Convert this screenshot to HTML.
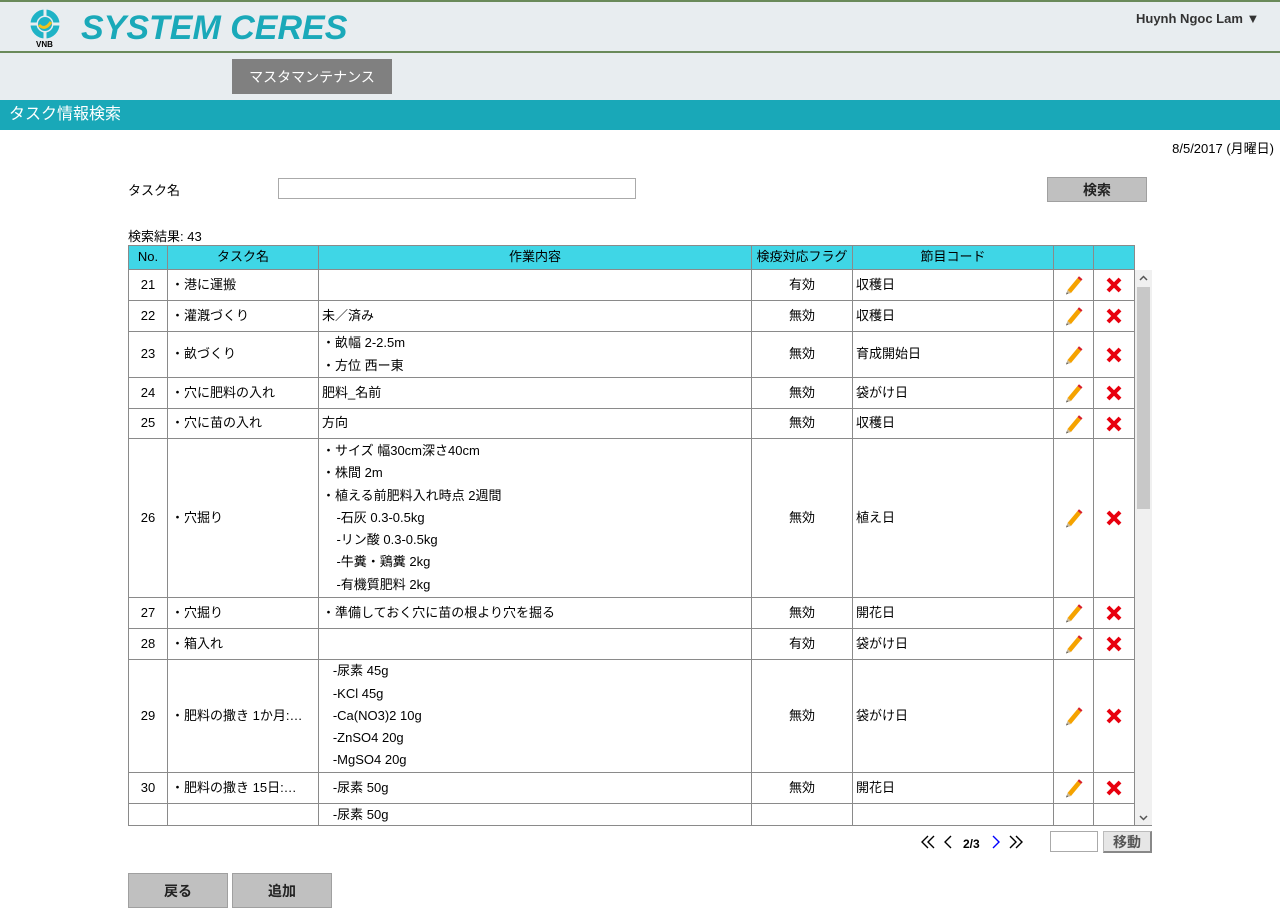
<!DOCTYPE html>
<html><head><meta charset="utf-8">
<style>
*{margin:0;padding:0;box-sizing:border-box}
body{width:1280px;height:913px;overflow:hidden;background:#fff;font-family:"Liberation Sans","Noto Sans CJK JP",sans-serif;font-size:13px;color:#000;position:relative}
.abs{position:absolute}
#top{left:0;top:0;width:1280px;height:100px;background:#e8edf0}
.gl{left:0;width:1280px;height:2px;background:#6a8a5a}
.r{position:absolute;left:0;width:1007px;border-bottom:1px solid #8a8a8a}
.c{position:absolute;top:0;bottom:0;border-right:1px solid #8a8a8a;display:flex;align-items:center;padding-left:3px;line-height:22.3px}
.c1{left:0;width:40px;justify-content:center;padding:0;border-left:1px solid #8a8a8a}
.c2{left:40px;width:151px}
.c3{left:191px;width:433px}
.c4{left:624px;width:101px;justify-content:center;padding:0}
.c5{left:725px;width:201px}
.c6{left:926px;width:40px;justify-content:center;padding:0}
.c7{left:966px;width:41px;justify-content:center;padding:0}
.btn{position:absolute;background:#c0c0c0;border:1px solid #a0a0a0;display:flex;align-items:center;justify-content:center;font-weight:bold;font-size:14px;color:#222}
</style></head><body>
<div id="top" class="abs"></div>
<div class="abs gl" style="top:0"></div>
<div class="abs gl" style="top:51px"></div>
<svg class="abs" style="left:30px;top:9px" width="30" height="30" viewBox="0 0 30 30">
<circle cx="15" cy="15" r="11.5" fill="none" stroke="#1fb3c6" stroke-width="6"/>
<rect x="13.5" y="0" width="3" height="30" fill="#e8edf0"/><rect x="0" y="13.5" width="30" height="3" fill="#e8edf0"/>
<circle cx="15" cy="15" r="7" fill="#1fb3c6"/>
<path d="M9 16 Q15 22 21 13" stroke="#f2c21b" stroke-width="3" fill="none"/>
</svg>
<div class="abs" style="left:36px;top:40px;font-size:8px;font-weight:bold">VNB</div>
<div class="abs" style="left:81px;top:9px;font-size:34px;font-weight:bold;font-style:italic;color:#1aa9b9">SYSTEM CERES</div>
<div class="abs" style="left:1136px;top:11px;font-size:13px;font-weight:bold;color:#333">Huynh Ngoc Lam ▼</div>
<div class="abs" style="left:232px;top:59px;width:160px;height:35px;background:#808080;color:#fff;display:flex;align-items:center;justify-content:center;font-size:14px">マスタマンテナンス</div>
<div class="abs" style="left:0;top:100px;width:1280px;height:30px;background:#19a8b8;color:#fff;font-size:16px;padding-left:9px;line-height:30px">タスク情報検索</div>
<div class="abs" style="right:6px;top:138px">8/5/2017 (月曜日)</div>
<div class="abs" style="left:128px;top:180px">タスク名</div>
<div class="abs" style="left:278px;top:178px;width:358px;height:21px;border:1px solid #aaa"></div>
<div class="btn" style="left:1047px;top:177px;width:100px;height:25px">検索</div>
<div class="abs" style="left:128px;top:226px">検索結果: 43</div>
<div class="abs" style="left:128px;top:245px;width:1007px;height:25px;background:#3fd6e6;border-top:1px solid #8a8a8a">
<div class="r" style="top:0;height:24px;border-bottom:1px solid #8a8a8a">
<div class="c c1">No.</div><div class="c c2" style="justify-content:center;padding:0">タスク名</div><div class="c c3" style="justify-content:center;padding:0">作業内容</div><div class="c c4">検疫対応フラグ</div><div class="c c5" style="justify-content:center;padding:0">節目コード</div><div class="c c6"></div><div class="c c7"></div></div>
</div>
<div class="abs" style="left:128px;top:270px;width:1024px;height:556px;overflow:hidden;border-bottom:1px solid #8a8a8a">
<div class="r" style="top:0;height:31px"><div class="c c1">21</div><div class="c c2">・港に運搬</div><div class="c c3"></div><div class="c c4">有効</div><div class="c c5">収穫日</div><div class="c c6 e"></div><div class="c c7 d"></div></div>
<div class="r" style="top:31px;height:31px"><div class="c c1">22</div><div class="c c2">・灌漑づくり</div><div class="c c3">未／済み</div><div class="c c4">無効</div><div class="c c5">収穫日</div><div class="c c6 e"></div><div class="c c7 d"></div></div>
<div class="r" style="top:62px;height:46px"><div class="c c1">23</div><div class="c c2">・畝づくり</div><div class="c c3">・畝幅 2-2.5m<br>・方位 西ー東</div><div class="c c4">無効</div><div class="c c5">育成開始日</div><div class="c c6 e"></div><div class="c c7 d"></div></div>
<div class="r" style="top:108px;height:31px"><div class="c c1">24</div><div class="c c2">・穴に肥料の入れ</div><div class="c c3">肥料_名前</div><div class="c c4">無効</div><div class="c c5">袋がけ日</div><div class="c c6 e"></div><div class="c c7 d"></div></div>
<div class="r" style="top:139px;height:30px"><div class="c c1">25</div><div class="c c2">・穴に苗の入れ</div><div class="c c3">方向</div><div class="c c4">無効</div><div class="c c5">収穫日</div><div class="c c6 e"></div><div class="c c7 d"></div></div>
<div class="r" style="top:169px;height:159px"><div class="c c1">26</div><div class="c c2">・穴掘り</div><div class="c c3">・サイズ 幅30cm深さ40cm<br>・株間 2m<br>・植える前肥料入れ時点 2週間<br>&nbsp;&nbsp;&nbsp;&nbsp;-石灰 0.3-0.5kg<br>&nbsp;&nbsp;&nbsp;&nbsp;-リン酸 0.3-0.5kg<br>&nbsp;&nbsp;&nbsp;&nbsp;-牛糞・鶏糞 2kg<br>&nbsp;&nbsp;&nbsp;&nbsp;-有機質肥料 2kg</div><div class="c c4">無効</div><div class="c c5">植え日</div><div class="c c6 e"></div><div class="c c7 d"></div></div>
<div class="r" style="top:328px;height:31px"><div class="c c1">27</div><div class="c c2">・穴掘り</div><div class="c c3">・準備しておく穴に苗の根より穴を掘る</div><div class="c c4">無効</div><div class="c c5">開花日</div><div class="c c6 e"></div><div class="c c7 d"></div></div>
<div class="r" style="top:359px;height:31px"><div class="c c1">28</div><div class="c c2">・箱入れ</div><div class="c c3"></div><div class="c c4">有効</div><div class="c c5">袋がけ日</div><div class="c c6 e"></div><div class="c c7 d"></div></div>
<div class="r" style="top:390px;height:113px"><div class="c c1">29</div><div class="c c2">・肥料の撒き 1か月:…</div><div class="c c3">&nbsp;&nbsp;&nbsp;-尿素 45g<br>&nbsp;&nbsp;&nbsp;-KCl 45g<br>&nbsp;&nbsp;&nbsp;-Ca(NO3)2 10g<br>&nbsp;&nbsp;&nbsp;-ZnSO4 20g<br>&nbsp;&nbsp;&nbsp;-MgSO4 20g</div><div class="c c4">無効</div><div class="c c5">袋がけ日</div><div class="c c6 e"></div><div class="c c7 d"></div></div>
<div class="r" style="top:503px;height:31px"><div class="c c1">30</div><div class="c c2">・肥料の撒き 15日:…</div><div class="c c3">&nbsp;&nbsp;&nbsp;-尿素 50g</div><div class="c c4">無効</div><div class="c c5">開花日</div><div class="c c6 e"></div><div class="c c7 d"></div></div>
<div class="r" style="top:534px;height:40px;border-bottom:none"><div class="c c1"></div><div class="c c2"></div><div class="c c3" style="align-items:flex-start;padding-top:0">&nbsp;&nbsp;&nbsp;-尿素 50g</div><div class="c c4"></div><div class="c c5"></div><div class="c c6"></div><div class="c c7"></div></div>
<div class="abs" style="left:1007px;top:0;width:17px;height:556px;background:#f0f0f0">
<div class="abs" style="left:2px;top:17px;width:13px;height:222px;background:#c8c8c8"></div>
<svg class="abs" style="left:4px;top:5px" width="9" height="6"><path d="M1 5 L4.5 1.5 L8 5" stroke="#555" stroke-width="1.5" fill="none"/></svg>
<svg class="abs" style="left:4px;top:545px" width="9" height="6"><path d="M1 1 L4.5 4.5 L8 1" stroke="#555" stroke-width="1.5" fill="none"/></svg>
</div>
</div>
<svg class="abs" style="left:920px;top:834px" width="110" height="16">
<path d="M8 2 L2 8 L8 14 M14 2 L8 8 L14 14" stroke="#000" stroke-width="1.4" fill="none"/>
<path d="M31 2 L25 8 L31 14" stroke="#000" stroke-width="1.4" fill="none"/>
<path d="M73 2 L79 8 L73 14" stroke="#00f" stroke-width="1.4" fill="none"/>
<path d="M90 2 L96 8 L90 14 M96 2 L102 8 L96 14" stroke="#000" stroke-width="1.4" fill="none"/>
</svg>
<div class="abs" style="left:963px;top:837px;font-size:12px;font-weight:bold">2/3</div>
<div class="abs" style="left:1050px;top:831px;width:48px;height:21px;border:1px solid #aaa"></div>
<div class="btn" style="left:1103px;top:831px;width:49px;height:22px;background:#e6e6e6;border:1px solid #bbb;border-right:2px solid #888;border-bottom:2px solid #888;color:#555">移動</div>
<div class="btn" style="left:128px;top:873px;width:100px;height:35px">戻る</div>
<div class="btn" style="left:232px;top:873px;width:100px;height:35px">追加</div>
<script>
var pen='<svg width="20" height="20" viewBox="0 0 20 20"><path d="M3.5 15 L13.5 3 L17 6 L7 18 Z" fill="#f5a300"/><path d="M13.5 3 L15 1.2 L18.5 4.2 L17 6 Z" fill="#d8202a"/><path d="M3.5 15 L7 18 L2 19.5 Z" fill="#c8b898"/><path d="M2 19.5 L2.8 17.3 L4.2 18.5 Z" fill="#555"/></svg>';
var x='<svg width="18" height="18" viewBox="0 0 18 18"><path d="M3 3 L15 15 M15 3 L3 15" stroke="#e8000e" stroke-width="4"/></svg>';
document.querySelectorAll('.e').forEach(function(e){e.innerHTML=pen});
document.querySelectorAll('.d').forEach(function(e){e.innerHTML=x});
</script>
</body></html>
